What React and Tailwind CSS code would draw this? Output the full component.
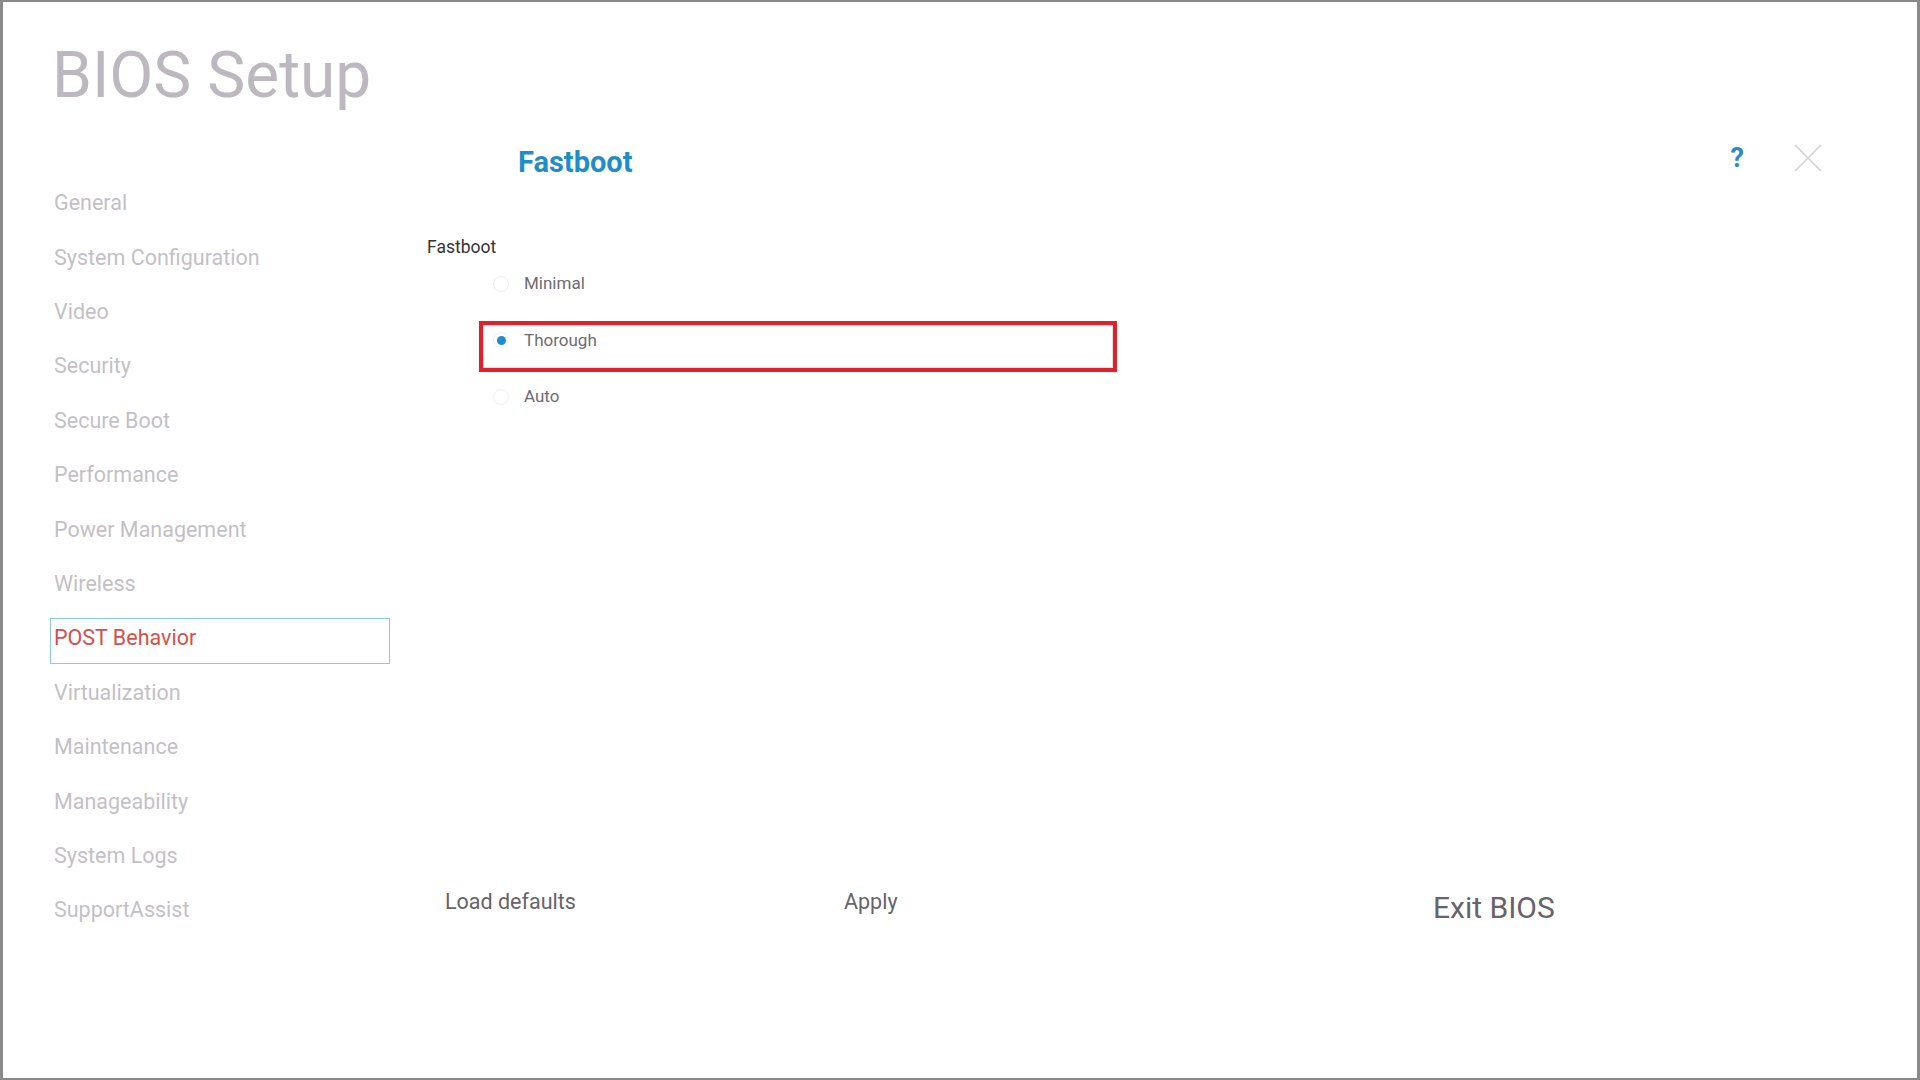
import React from "react";

const menu = [
  "General",
  "System Configuration",
  "Video",
  "Security",
  "Secure Boot",
  "Performance",
  "Power Management",
  "Wireless",
  "POST Behavior",
  "Virtualization",
  "Maintenance",
  "Manageability",
  "System Logs",
  "SupportAssist",
];

const options = ["Minimal", "Thorough", "Auto"];

const Radio = ({ checked }) => (
  <span className="w-4 h-4 rounded-full border border-[#f1eef3] flex items-center justify-center flex-none">
    {checked && <span className="w-[9px] h-[9px] rounded-full bg-[#1b8fd2]" />}
  </span>
);

export default function App() {
  const active = "POST Behavior";
  const selected = "Thorough";

  return (
    <div
      className="w-[1920px] h-[1080px] bg-white border-l-[3px] border-r-[3px] border-t-2 border-b-2 border-[#8a8a8a] flex flex-col overflow-hidden"
      style={{ fontFamily: "Roboto, 'Open Sans', sans-serif" }}
    >
      <header className="pt-[42px] pl-[49px] h-[105px] flex-none">
        <h1 className="text-[64px] leading-none text-[#bdb8bf] font-normal">BIOS Setup</h1>
      </header>

      <div className="flex flex-1">
        {/* left menu */}
        <nav className="w-[340px] ml-[47px] flex-none pt-[69px] flex flex-col">
          {menu.map((item) => (
            <div key={item} className="h-[54.4px] pt-[7px]">
              <div
                className={
                  item === active
                    ? "w-full h-[46px] flex items-center pb-[6px] pl-[3px] border-[1.5px] border-[#8ccbdb] text-[#d5504b] text-[21.5px] leading-none"
                    : "w-full h-[46px] flex items-center pb-[6px] pl-[3px] border-[1.5px] border-transparent text-[#c4bfc7] text-[21.5px] leading-none"
                }
              >
                {item}
              </div>
            </div>
          ))}
        </nav>

        {/* main panel */}
        <main className="flex-1 flex flex-col">
          <div className="flex items-start mt-[41px]">
            <h2 className="ml-[128px] text-[29px] leading-none font-bold text-[#1f8dc9]">Fastboot</h2>
            <div className="flex-1" />
            <span className="-mt-[3px] text-[27px] leading-none font-bold text-[#2b8bc3]">?</span>
            <svg className="-mt-[4px] ml-[50px] mr-[95px]" width="28" height="28" viewBox="0 0 28 28">
              <path d="M1 1 L27 27 M27 1 L1 27" stroke="#d2ced5" strokeWidth="1.5" fill="none" />
            </svg>
          </div>

          <div className="mt-[62px] ml-[37px] text-[17.5px] leading-none text-[#333333]">Fastboot</div>

          <div className="flex flex-col -mt-[1px]">
            {options.map((opt) => (
              <div key={opt} className="relative ml-[89px] w-[638px] h-[56.5px] flex items-center pl-[14px]">
                <Radio checked={opt === selected} />
                <span className="ml-[15px] text-[17px] leading-none text-[#6f6b73]">{opt}</span>
                {opt === selected && (
                  <div className="absolute left-0 right-0 top-[9px] h-[51px] border-4 border-[#e3202a]">
                    <div className="w-full h-full border border-[#e2e2e6]" />
                  </div>
                )}
              </div>
            ))}
          </div>

          <div className="mt-[466px] ml-[55px] flex items-start">
            <span className="w-[399px] text-[21.5px] leading-none text-[#67636b]">Load defaults</span>
            <span className="w-[589px] text-[21.5px] leading-none text-[#67636b]">Apply</span>
            <span className="mt-[2px] text-[30px] leading-none text-[#67636b]">Exit BIOS</span>
          </div>
        </main>
      </div>
    </div>
  );
}
